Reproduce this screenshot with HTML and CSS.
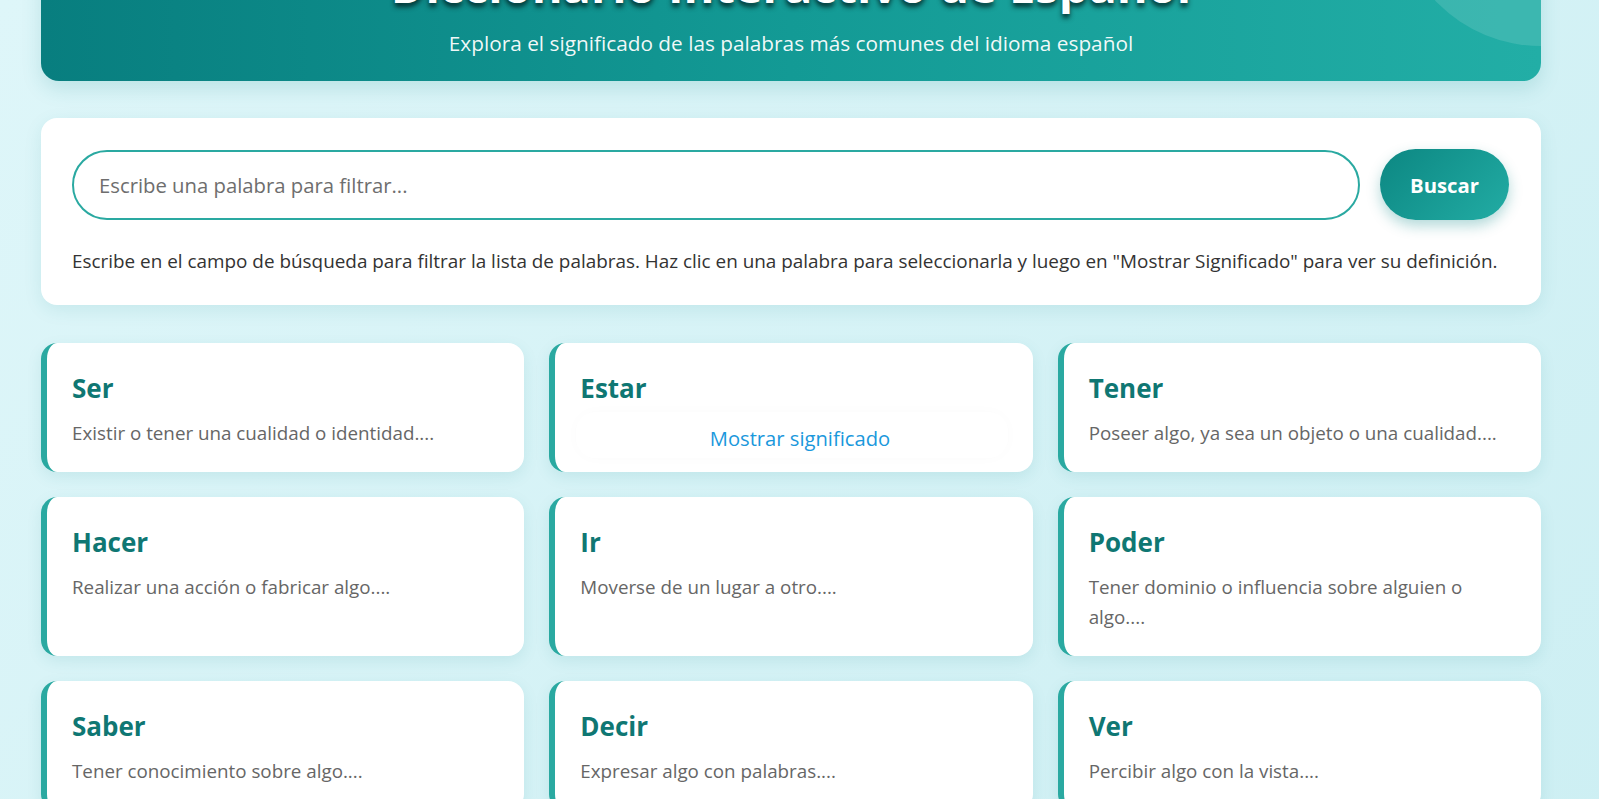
FILE: index.html
```html
<!DOCTYPE html>
<html lang="es">
<head>
<meta charset="utf-8">
<title>Diccionario Interactivo de Español</title>
<link rel="stylesheet" href="styles.css">
</head>
<body>
<div class="page">
  <header class="hero">
    <span class="hero-circle"></span>
    <h1 class="hero-title">Diccionario Interactivo de Español</h1>
    <p class="hero-sub">Explora el significado de las palabras más comunes del idioma español</p>
  </header>

  <section class="search-card">
    <div class="search-row">
      <input class="search-input" type="text" placeholder="Escribe una palabra para filtrar...">
      <button class="search-btn" type="button">Buscar</button>
    </div>
    <p class="search-help">Escribe en el campo de búsqueda para filtrar la lista de palabras. Haz clic en una palabra para seleccionarla y luego en "Mostrar Significado" para ver su definición.</p>
  </section>

  <main class="grid">
    <article class="card"><h2 class="card-title">Ser</h2><p class="card-desc">Existir o tener una cualidad o identidad....</p></article>
    <article class="card"><h2 class="card-title">Estar</h2><div class="card-action"><button class="show-btn" type="button">Mostrar significado</button></div></article>
    <article class="card"><h2 class="card-title">Tener</h2><p class="card-desc">Poseer algo, ya sea un objeto o una cualidad....</p></article>
    <article class="card"><h2 class="card-title">Hacer</h2><p class="card-desc">Realizar una acción o fabricar algo....</p></article>
    <article class="card"><h2 class="card-title">Ir</h2><p class="card-desc">Moverse de un lugar a otro....</p></article>
    <article class="card"><h2 class="card-title">Poder</h2><p class="card-desc">Tener dominio o influencia sobre alguien o algo....</p></article>
    <article class="card"><h2 class="card-title">Saber</h2><p class="card-desc">Tener conocimiento sobre algo....</p></article>
    <article class="card"><h2 class="card-title">Decir</h2><p class="card-desc">Expresar algo con palabras....</p></article>
    <article class="card"><h2 class="card-title">Ver</h2><p class="card-desc">Percibir algo con la vista....</p></article>
  </main>
</div>
</body>
</html>
```
FILE: styles.css
```css
html {
  scrollbar-width: none;
}
::-webkit-scrollbar {
  width: 0;
  height: 0;
}
body {
  margin: 0;
  padding: 0 58px 40px 41px;
  font-family: "Open Sans", "Noto Sans", sans-serif;
  line-height: 1.7;
  color: #333;
  background: linear-gradient(135deg, #def6f9 0%, #cdeff3 100%);
  min-height: 100vh;
}
.page {
  max-width: 1500px;
  margin-top: -79px;
}
.hero {
  position: relative;
  overflow: hidden;
  background: linear-gradient(90deg, #087e7f 0%, #139a95 50%, #22aea6 100%);
  border-radius: 18px;
  padding: 36px 40px 22px;
  text-align: center;
  color: #fff;
  box-shadow: 0 8px 20px rgba(0, 128, 128, 0.15);
}
.hero-circle {
  position: absolute;
  right: -146px;
  bottom: 35px;
  width: 292px;
  height: 292px;
  border-radius: 50%;
  background: rgba(255, 255, 255, 0.12);
}
.hero-title {
  margin: 0 0 14px;
  font-size: 47px;
  line-height: 1.2;
  font-weight: 700;
  color: #fff;
  text-shadow: 0 4px 5px rgba(0, 35, 35, 0.85);
}
.hero-sub {
  margin: 0;
  font-size: 20.8px;
  line-height: 32px;
  color: rgba(255, 255, 255, 0.95);
}
.search-card {
  margin-top: 37px;
  background: #fff;
  border-radius: 16px;
  padding: 31px 32px 29px 31px;
  box-shadow: 0 5px 18px rgba(0, 128, 128, 0.1);
}
.search-row {
  display: flex;
  gap: 20px;
  align-items: center;
}
.search-input {
  flex: 1;
  height: 70px;
  box-sizing: border-box;
  border: 2px solid #2aa9a1;
  border-radius: 35px;
  padding: 0 25px;
  font-family: inherit;
  font-size: 20.3px;
  color: #333;
  outline: none;
  background: #fff;
}
.search-input::placeholder {
  color: #6e6e6e;
}
.search-btn {
  width: 129px;
  height: 71px;
  border: none;
  border-radius: 36px;
  background: linear-gradient(135deg, #0c8782 0%, #22aca4 100%);
  color: #fff;
  font-family: inherit;
  font-size: 20.3px;
  font-weight: 700;
  box-shadow: 0 6px 14px rgba(0, 128, 128, 0.3);
  cursor: pointer;
}
.search-help {
  margin: 26px 0 0;
  font-size: 18.9px;
  line-height: 30px;
  color: #333;
}
.grid {
  margin-top: 38px;
  display: grid;
  grid-template-columns: repeat(3, 1fr);
  gap: 25px;
}
.card {
  background: #fff;
  border-radius: 16px;
  border-left: 6px solid #2aa9a1;
  padding: 25px 25px 24px;
  box-shadow: 0 5px 15px rgba(0, 128, 128, 0.1);
}
.card-title {
  margin: 0 0 9px;
  font-size: 26px;
  line-height: 41px;
  font-weight: 700;
  color: #0f7773;
}
.card-desc {
  margin: 0;
  font-size: 18.8px;
  line-height: 30px;
  color: #666;
}
.card-action {
  position: relative;
  height: 30px;
}
.show-btn {
  position: absolute;
  left: -4px;
  right: 0;
  top: -6px;
  height: 46px;
  padding: 6px 0 0 16px;
  border: none;
  border-radius: 20px;
  background: rgba(255, 255, 255, 0.9);
  box-shadow: 0 0 14px rgba(0, 0, 0, 0.02);
  font-family: inherit;
  font-size: 20.2px;
  color: #1a98dc;
  text-align: center;
  cursor: pointer;
}
```
